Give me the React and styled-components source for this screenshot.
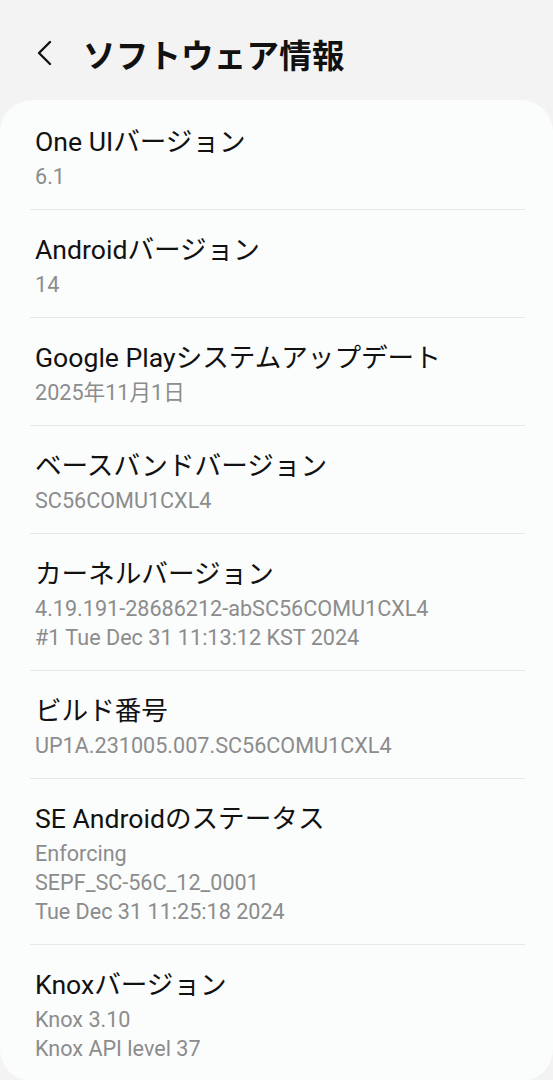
import React from "react";
import styled, { createGlobalStyle } from "styled-components";

const Global = createGlobalStyle`
  html, body { margin: 0; padding: 0; background: #f3f3f3; }
  body { font-family: "Roboto", "Noto Sans CJK JP", sans-serif; -webkit-font-smoothing: antialiased; }
`;

const Page = styled.div`
  width: 553px;
  min-height: 1080px;
  background: #f3f3f3;
  display: flex;
  flex-direction: column;
`;

const Header = styled.header`
  height: 100px;
  display: flex;
  align-items: center;
  gap: 26px;
  padding: 6px 0 0 33px;
  box-sizing: border-box;
`;

const BackButton = styled.button`
  border: 0;
  background: none;
  padding: 0;
  width: 24px;
  height: 28px;
  display: flex;
  align-items: center;
  justify-content: center;
  color: #111;
`;

const Title = styled.h1`
  margin: 0;
  font-family: "Noto Sans CJK JP", "Roboto", sans-serif;
  font-weight: 700;
  font-size: 32.5px;
  letter-spacing: 0.2px;
  color: #111;
`;

const Card = styled.section`
  background: #fbfcfc;
  border-radius: 32px;
  margin-bottom: 14px;
`;

const RowWrap = styled.div`
  margin: 0 28px 0 30px;
  &:first-child > div {
    padding-top: 21.5px;
  }
  & + & > div {
    border-top: 1.5px solid #e6e7e7;
  }
`;

const Inner = styled.div`
  padding: 19.5px 0 18.5px 5px;
`;

const ItemTitle = styled.div`
  font-size: 26.6px;
  line-height: 40px;
  color: #111;
  white-space: nowrap;
`;

const Sub = styled.div`
  font-size: 21.6px;
  line-height: 29px;
  color: #8c8c8c;
  white-space: nowrap;
`;

const items = [
  { t: "One UIバージョン", s: ["6.1"] },
  { t: "Androidバージョン", s: ["14"] },
  { t: "Google Playシステムアップデート", s: ["2025年11月1日"] },
  { t: "ベースバンドバージョン", s: ["SC56COMU1CXL4"] },
  { t: "カーネルバージョン", s: ["4.19.191-28686212-abSC56COMU1CXL4", "#1 Tue Dec 31 11:13:12 KST 2024"] },
  { t: "ビルド番号", s: ["UP1A.231005.007.SC56COMU1CXL4"] },
  { t: "SE Androidのステータス", s: ["Enforcing", "SEPF_SC-56C_12_0001", "Tue Dec 31 11:25:18 2024"] },
  { t: "Knoxバージョン", s: ["Knox 3.10", "Knox API level 37"] },
];

export default function App() {
  return (
    <Page>
      <Global />
      <Header>
        <BackButton aria-label="戻る">
          <svg width="18" height="26" viewBox="0 0 18 26" fill="none">
            <path d="M14 2 L3 13 L14 24" stroke="#111" strokeWidth="2.4" strokeLinecap="round" strokeLinejoin="round" />
          </svg>
        </BackButton>
        <Title>ソフトウェア情報</Title>
      </Header>
      <Card>
        {items.map((it) => (
          <RowWrap key={it.t}>
            <Inner>
              <ItemTitle>{it.t}</ItemTitle>
              {it.s.map((s) => (
                <Sub key={s}>{s}</Sub>
              ))}
            </Inner>
          </RowWrap>
        ))}
      </Card>
    </Page>
  );
}
